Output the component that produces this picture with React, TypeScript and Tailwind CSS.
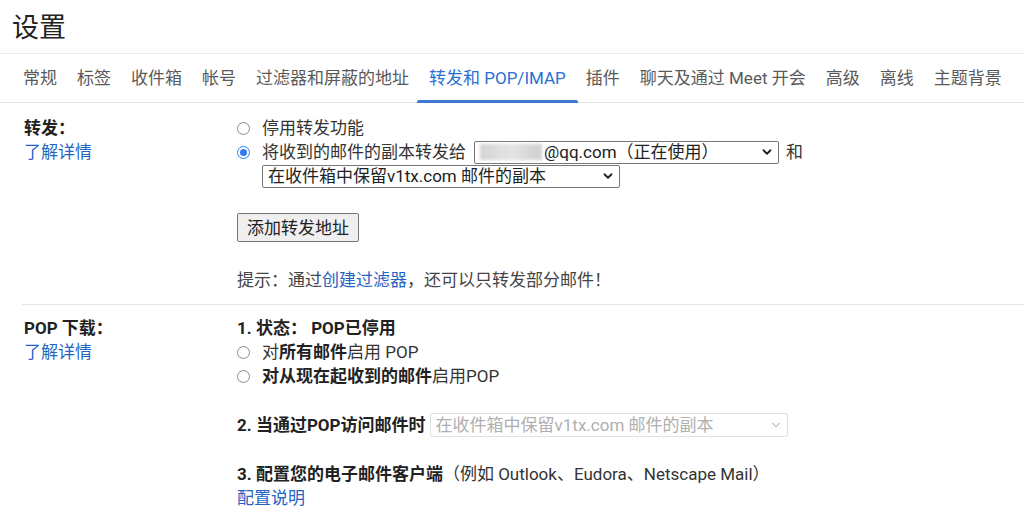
import { ChevronDown } from 'lucide-react'

const tabs = [
  '常规',
  '标签',
  '收件箱',
  '帐号',
  '过滤器和屏蔽的地址',
  '转发和 POP/IMAP',
  '插件',
  '聊天及通过 Meet 开会',
  '高级',
  '离线',
  '主题背景',
]

const ACTIVE_TAB = '转发和 POP/IMAP'

function Radio({ checked = false }: { checked?: boolean }) {
  if (checked) {
    return (
      <span className="w-[13px] h-[13px] rounded-full border-[1.5px] border-[#2f7cf0] flex items-center justify-center shrink-0">
        <span className="w-[7px] h-[7px] rounded-full bg-[#2f7cf0]" />
      </span>
    )
  }
  return <span className="w-[13px] h-[13px] rounded-full border border-[#8a8a8a] bg-white shrink-0" />
}

function FakeSelect({
  children,
  width,
  disabled = false,
}: {
  children: React.ReactNode
  width: string
  disabled?: boolean
}) {
  return (
    <div
      className={`${width} flex items-center justify-between rounded-[2px] border pl-[5px] pr-[4px] ${
        disabled ? 'h-[24px] border-[#e0e0e0] text-[#b0b0b0]' : 'h-[23px] border-[#767676] text-[#222]'
      }`}
    >
      <span className="flex items-center whitespace-nowrap leading-[20px]">{children}</span>
      <ChevronDown
        className={`w-[14px] h-[14px] ${disabled ? 'text-[#c4c4c4]' : 'text-[#222]'}`}
        strokeWidth={disabled ? 2 : 3.2}
      />
    </div>
  )
}

export default function App() {
  return (
    <div className="w-[1024px] h-[518px] overflow-hidden bg-white text-[17px] leading-[24px] text-[#222] font-['Roboto','Noto_Sans_CJK_SC',sans-serif]">
      {/* Page title */}
      <div className="h-[54px] flex items-center pl-[12px] border-b border-[#ececec]">
        <h1 className="text-[27px] leading-[32px] text-[#222] pt-[2px]">设置</h1>
      </div>

      {/* Tabs */}
      <div className="h-[49px] flex items-stretch pl-[13px] border-b border-[#e6e6e6]">
        {tabs.map((tab) => (
          <div
            key={tab}
            className={`relative flex items-center px-[10px] whitespace-nowrap ${
              tab === ACTIVE_TAB ? 'text-[#2a6fd2]' : 'text-[#5a5a5a]'
            }`}
          >
            {tab}
            {tab === ACTIVE_TAB && (
              <span className="absolute left-[-2px] right-[-2px] bottom-[-1px] h-[3px] bg-[#3b78cf] rounded-t-[2px]" />
            )}
          </div>
        ))}
      </div>

      {/* Forwarding */}
      <div className="ml-[22px] flex pt-[13px] pb-[12px] border-b border-[#e6e6e6]">
        <div className="w-[215px] shrink-0 pl-[2px]">
          <div className="font-bold">转发：</div>
          <a className="text-[#2563c4]">了解详情</a>
        </div>
        <div className="flex flex-col text-[#333]">
          <div className="flex items-center h-[24px]">
            <Radio />
            <span className="ml-[12px]">停用转发功能</span>
          </div>
          <div className="flex items-center h-[24px]">
            <Radio checked />
            <span className="ml-[12px]">将收到的邮件的副本转发给</span>
            <div className="ml-[8px]">
              <FakeSelect width="w-[305px]">
                <span className="w-[62px] h-[16px] mr-[2px] blur-[1.5px] bg-gradient-to-r from-[#d4d4d4] via-[#e4e4e4] to-[#cfcfcf]" />
                @qq.com（正在使用）
              </FakeSelect>
            </div>
            <span className="ml-[7px]">和</span>
          </div>
          <div className="flex items-center h-[24px] pl-[25px]">
            <FakeSelect width="w-[358px]">在收件箱中保留v1tx.com 邮件的副本</FakeSelect>
          </div>
          <div className="mt-[25px]">
            <button className="h-[29px] px-[9px] border border-[#767676] rounded-[2px] bg-[#efefef] text-[#222] leading-[24px]">
              添加转发地址
            </button>
          </div>
          <div className="mt-[26px] text-[#444]">
            提示：通过<a className="text-[#2563c4]">创建过滤器</a>，还可以只转发部分邮件！
          </div>
        </div>
      </div>

      {/* POP download */}
      <div className="ml-[22px] flex pt-[11px]">
        <div className="w-[215px] shrink-0 pl-[2px]">
          <div className="font-bold">POP 下载：</div>
          <a className="text-[#2563c4]">了解详情</a>
        </div>
        <div className="flex flex-col text-[#333]">
          <div className="font-bold text-[#222]">1. 状态： POP已停用</div>
          <div className="flex items-center h-[24px]">
            <Radio />
            <span className="ml-[12px]">
              对<b className="text-[#222]">所有邮件</b>启用 POP
            </span>
          </div>
          <div className="flex items-center h-[24px]">
            <Radio />
            <span className="ml-[12px]">
              <b className="text-[#222]">对从现在起收到的邮件</b>启用POP
            </span>
          </div>
          <div className="mt-[25px] flex items-center h-[24px]">
            <span className="font-bold text-[#222]">2. 当通过POP访问邮件时</span>
            <div className="ml-[4px]">
              <FakeSelect width="w-[358px]" disabled>
                在收件箱中保留v1tx.com 邮件的副本
              </FakeSelect>
            </div>
          </div>
          <div className="mt-[25px]">
            <b className="text-[#222]">3. 配置您的电子邮件客户端</b>（例如 Outlook、Eudora、Netscape Mail）
          </div>
          <a className="text-[#2563c4]">配置说明</a>
        </div>
      </div>
    </div>
  )
}
